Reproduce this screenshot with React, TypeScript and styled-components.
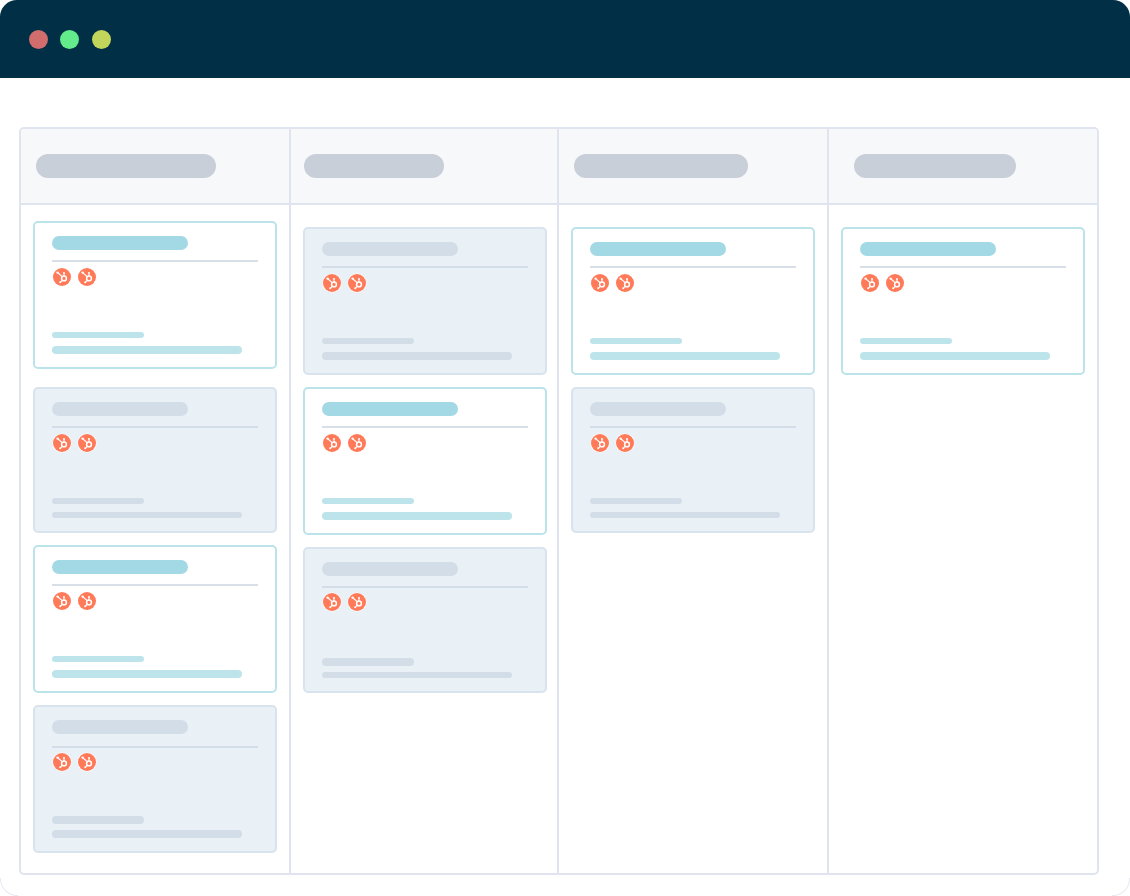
import React from 'react';
import styled, { createGlobalStyle } from 'styled-components';

const GlobalStyle = createGlobalStyle`
  html, body {
    margin: 0;
    padding: 0;
    background: #fff;
  }
`;

const AppWindow = styled.div`
  position: relative;
  width: 1130px;
  height: 896px;
  background: #fff;

  &::before,
  &::after {
    content: '';
    position: absolute;
    bottom: 0;
    box-sizing: border-box;
    width: 18px;
    height: 18px;
    border-bottom: 1px solid #e6e9f0;
  }

  &::before {
    left: 0;
    border-left: 1px solid #e6e9f0;
    border-bottom-left-radius: 17px;
  }

  &::after {
    right: 0;
    border-right: 1px solid #e6e9f0;
    border-bottom-right-radius: 17px;
  }
`;

const TitleBar = styled.div`
  display: flex;
  align-items: center;
  gap: 12.4px;
  height: 78px;
  padding-left: 29px;
  box-sizing: border-box;
  background: #012f45;
  border-radius: 17px 17px 0 0;
`;

const Dot = styled.span<{ $color: string }>`
  width: 19px;
  height: 19px;
  border-radius: 50%;
  background: ${(p) => p.$color};
`;

const Board = styled.div`
  display: grid;
  grid-template-columns: 270px 268px 270px 268px;
  box-sizing: border-box;
  width: 1080px;
  height: 748px;
  margin: 49px 0 0 19px;
  border: 2px solid #dfe4ee;
  border-radius: 5px;
  overflow: hidden;
`;

const Column = styled.div`
  display: flex;
  flex-direction: column;
  box-sizing: border-box;
  border-right: 2px solid #dfe4ee;

  &:last-child {
    border-right: none;
  }
`;

const ColumnHeader = styled.div<{ $inset: number }>`
  display: flex;
  align-items: center;
  box-sizing: border-box;
  flex: 0 0 76px;
  padding-left: ${(p) => p.$inset}px;
  background: #f6f8fa;
  border-bottom: 2px solid #dfe4ee;
`;

const HeaderPill = styled.div<{ $width: number }>`
  width: ${(p) => p.$width}px;
  height: 24px;
  border-radius: 12px;
  background: #c8cfd8;
`;

const CardList = styled.div`
  display: flex;
  flex-direction: column;
  padding: 0 12px;
`;

const Card = styled.div<{ $active: boolean; $height: number; $top: number }>`
  display: flex;
  flex-direction: column;
  box-sizing: border-box;
  width: 244px;
  height: ${(p) => p.$height}px;
  margin-top: ${(p) => p.$top}px;
  padding: 13px 17px;
  border: 2px solid ${(p) => (p.$active ? '#bbe3ea' : '#d9e3ed')};
  border-radius: 5px;
  background: ${(p) => (p.$active ? '#fff' : '#e9f0f6')};
`;

const CardTitle = styled.div<{ $active: boolean }>`
  width: 136px;
  height: 14px;
  border-radius: 7px;
  background: ${(p) => (p.$active ? '#a2d9e5' : '#d2dde7')};
`;

const Divider = styled.div<{ $active: boolean; $gap: number }>`
  width: 206px;
  height: 2px;
  margin-top: ${(p) => p.$gap}px;
  background: ${(p) => (p.$active ? '#d9dfe9' : '#d2dde7')};
`;

const IconRow = styled.div<{ $gap: number }>`
  display: flex;
  gap: 5px;
  margin-top: ${(p) => p.$gap}px;
`;

const CardFooter = styled.div<{ $gap: number }>`
  display: flex;
  flex-direction: column;
  gap: ${(p) => p.$gap}px;
  margin-top: auto;
`;

const MetaLine = styled.div<{ $active: boolean; $width: number; $height: number }>`
  width: ${(p) => p.$width}px;
  height: ${(p) => p.$height}px;
  border-radius: ${(p) => p.$height / 2}px;
  background: ${(p) => (p.$active ? '#bce4ea' : '#d2dde7')};
`;

const HubIcon = styled.svg`
  display: block;
  width: 20px;
  height: 20px;
`;

const HubSpotBadge = () => (
  <HubIcon viewBox="0 0 20 20">
    <circle cx="10" cy="10" r="9.6" fill="#fff" />
    <circle cx="10" cy="10" r="9" fill="#ff7a59" />
    <g stroke="#fff" fill="none">
      <circle cx="12" cy="11.4" r="2.4" strokeWidth="1.5" />
      <path d="M6 6 10.2 9.7M12 9V6.4M10.4 13.2 8.6 15" strokeWidth="1.1" />
    </g>
    <g fill="#fff">
      <circle cx="5.6" cy="5.6" r="1.2" />
      <circle cx="12" cy="6" r="1" />
      <circle cx="8.2" cy="15.3" r="1" />
    </g>
  </HubIcon>
);

type CardData = {
  active: boolean;
  height: number;
  top: number;
  lines: [number, number];
  ruleGap?: number;
  iconGap?: number;
};

type ColumnData = { inset: number; pill: number; cards: CardData[] };

const columns: ColumnData[] = [
  {
    inset: 15,
    pill: 180,
    cards: [
      { active: true, height: 148, top: 16, lines: [6, 8] },
      { active: false, height: 146, top: 18, lines: [6, 6] },
      { active: true, height: 148, top: 12, lines: [6, 8] },
      { active: false, height: 148, top: 12, lines: [8, 8], ruleGap: 12, iconGap: 4 },
    ],
  },
  {
    inset: 13,
    pill: 140,
    cards: [
      { active: false, height: 148, top: 22, lines: [6, 8] },
      { active: true, height: 148, top: 12, lines: [6, 8] },
      { active: false, height: 146, top: 12, lines: [8, 6], iconGap: 4 },
    ],
  },
  {
    inset: 15,
    pill: 174,
    cards: [
      { active: true, height: 148, top: 22, lines: [6, 8] },
      { active: false, height: 146, top: 12, lines: [6, 6] },
    ],
  },
  {
    inset: 25,
    pill: 162,
    cards: [{ active: true, height: 148, top: 22, lines: [6, 8] }],
  },
];

const App: React.FC = () => {
  return (
    <AppWindow>
      <GlobalStyle />
      <TitleBar>
        <Dot $color="#d26d6d" />
        <Dot $color="#63ec8c" />
        <Dot $color="#c2d65c" />
      </TitleBar>
      <Board>
        {columns.map((column) => (
          <Column key={column.inset + column.pill}>
            <ColumnHeader $inset={column.inset}>
              <HeaderPill $width={column.pill} />
            </ColumnHeader>
            <CardList>
              {column.cards.map((card, i) => (
                <Card key={i} $active={card.active} $height={card.height} $top={card.top}>
                  <CardTitle $active={card.active} />
                  <Divider $active={card.active} $gap={card.ruleGap ?? 10} />
                  <IconRow $gap={card.iconGap ?? 5}>
                    <HubSpotBadge />
                    <HubSpotBadge />
                  </IconRow>
                  <CardFooter $gap={14 - card.lines[0]}>
                    <MetaLine $active={card.active} $width={92} $height={card.lines[0]} />
                    <MetaLine $active={card.active} $width={190} $height={card.lines[1]} />
                  </CardFooter>
                </Card>
              ))}
            </CardList>
          </Column>
        ))}
      </Board>
    </AppWindow>
  );
};

export default App;
